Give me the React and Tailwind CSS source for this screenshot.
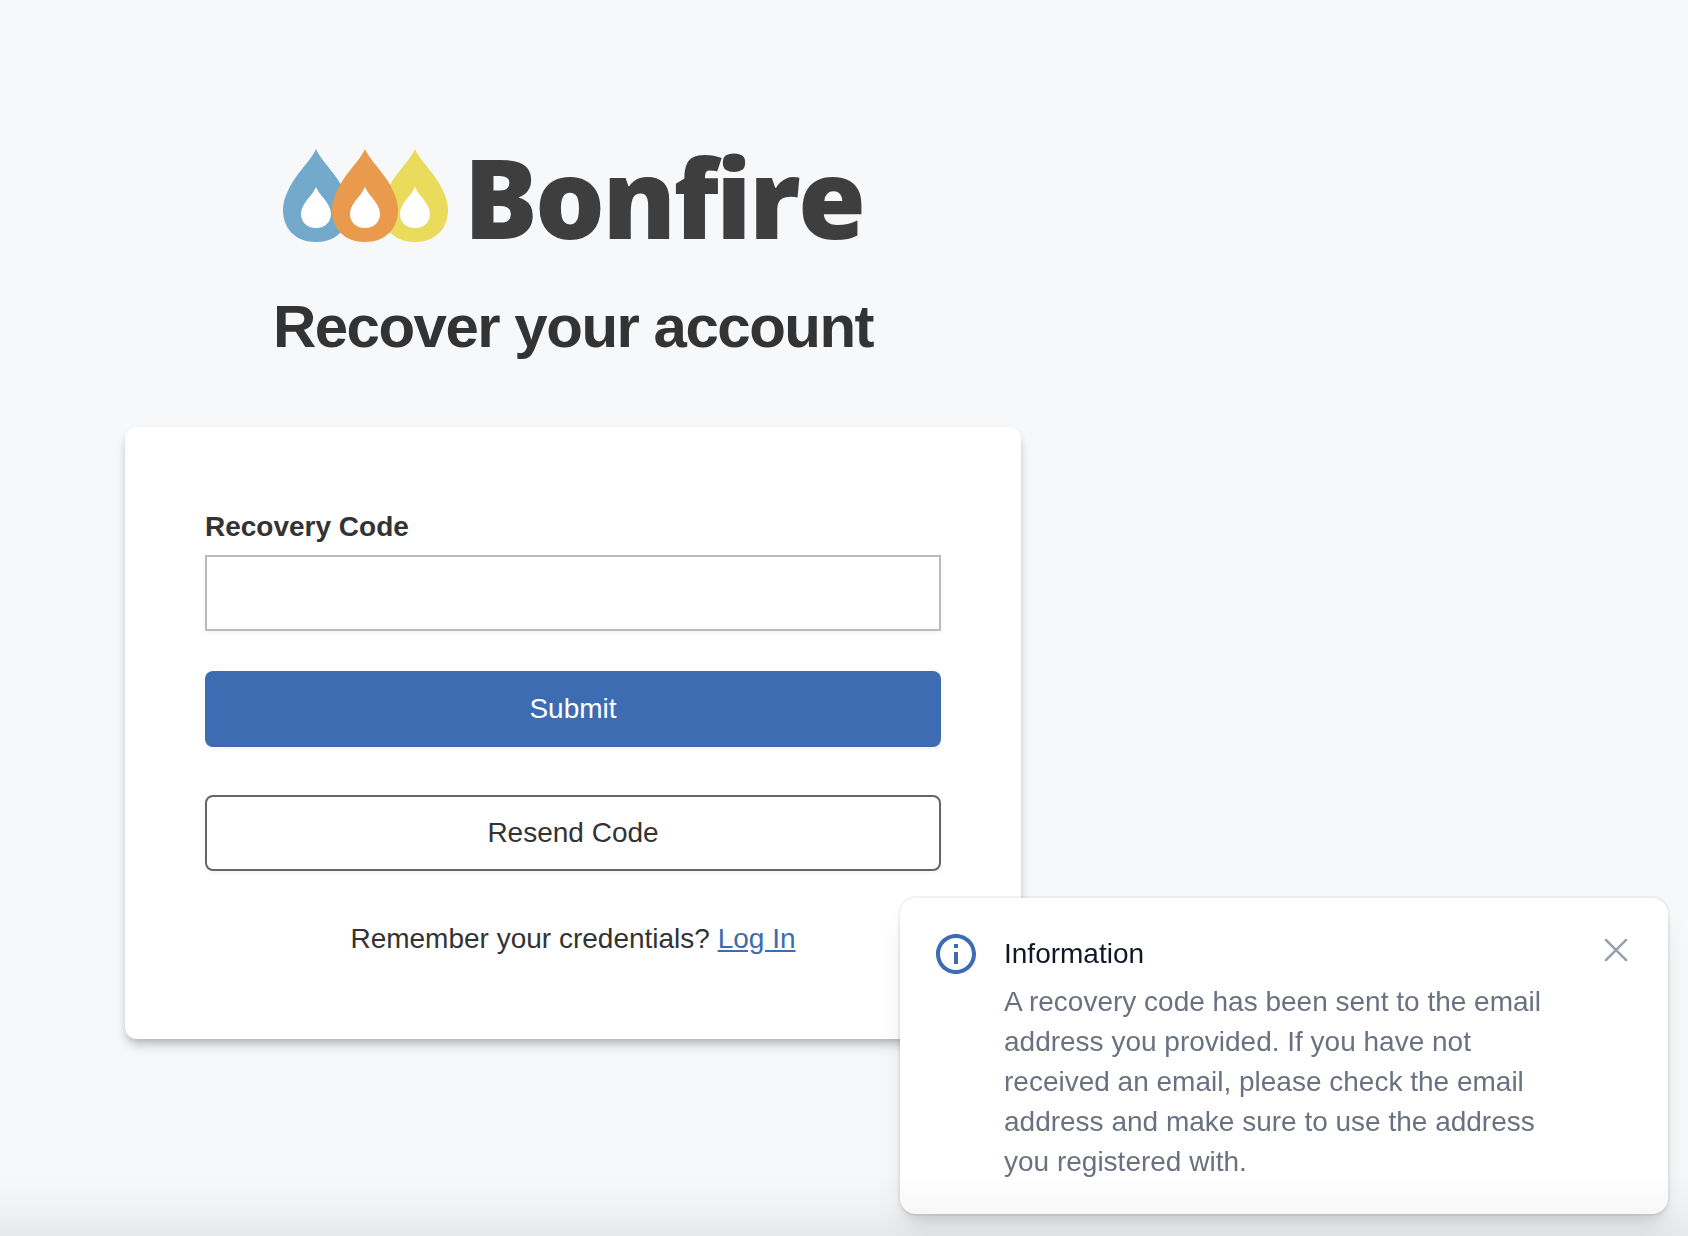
import { useState } from 'react';
import { X } from 'lucide-react';
import { MdInfoOutline } from 'react-icons/md';

const flames = [
  { x: 0, color: '#73aacc' },
  { x: 99, color: '#eadb5c' },
  { x: 49, color: '#ea9a4d' },
];

const Logo = () => (
  <div className="flex items-center justify-center gap-4 text-[#3e3e3e]">
    <svg viewBox="0 0 165 94" className="h-[94px] w-[165px]" aria-hidden="true">
      {flames.map(({ x, color }) => (
        <g key={color} transform={`translate(${x} 0)`}>
          <path
            d="M33 0C37 9 46 18 53 28C60 38 66 50 66 61C66 80 53 93 33 93C13 93 0 80 0 61C0 50 6 38 13 28C20 18 29 9 33 0Z"
            fill={color}
          />
          <path
            d="M33 38C35 43 39 47 42 51C45 55 48 60 48 65C48 73 42 79 33 79C24 79 18 73 18 65C18 60 21 55 24 51C27 47 31 43 33 38Z"
            fill="#fff"
          />
        </g>
      ))}
    </svg>
    <span className="font-['Open_Sans',sans-serif] text-[110px] leading-[94px] font-extrabold tracking-tight">
      Bonfire
    </span>
  </div>
);

const Toast = ({ title, message, onClose }) => (
  <div
    role="status"
    className="fixed right-5 bottom-[22px] w-full max-w-3xl rounded-2xl bg-white p-8 shadow-[0_0_0_2px_rgba(0,0,0,0.05),0_20px_30px_-6px_rgba(0,0,0,0.1),0_8px_12px_-4px_rgba(0,0,0,0.1)]"
  >
    <div className="flex items-start">
      <MdInfoOutline className="size-12 shrink-0 text-[#3d6cb2]" />
      <div className="ml-6 flex-1 pt-1">
        <p className="text-gray-900">{title}</p>
        <p className="mt-2 text-gray-500">{message}</p>
      </div>
      <button type="button" aria-label="Close" onClick={onClose} className="ml-8 shrink-0 text-gray-400">
        <X className="size-10" strokeWidth={1.5} />
      </button>
    </div>
  </div>
);

const App = () => {
  const [code, setCode] = useState('');
  const [showToast, setShowToast] = useState(true);

  const handleSubmit = (e) => {
    e.preventDefault();
  };

  return (
    <div className="min-h-screen bg-[#f7f8fa] font-['Liberation_Sans',Arial,sans-serif] text-[28px] leading-10 text-[#333]">
      <main className="max-w-[1146px] px-[125px] pt-[149px] pb-24">
        {/* Header */}
        <Logo />
        <h1 className="mt-12 text-center text-6xl leading-[72px] font-bold tracking-tight">Recover your account</h1>

        {/* Recovery form */}
        <form
          onSubmit={handleSubmit}
          className="mt-16 rounded-xl bg-white p-20 shadow-[0_8px_12px_-2px_rgba(0,0,0,0.18),0_4px_8px_-2px_rgba(0,0,0,0.15)]"
        >
          <label htmlFor="code" className="block font-bold">
            Recovery Code
          </label>
          <input
            id="code"
            type="text"
            value={code}
            onChange={(e) => setCode(e.target.value)}
            className="mt-2 block h-[76px] w-full border-2 border-[#bbb] bg-white px-6 shadow-[0_2px_4px_rgba(0,0,0,0.05)] outline-none"
          />
          <button
            type="submit"
            className="mt-10 block h-[76px] w-full rounded-lg bg-[#3d6cb2] text-white shadow-[0_2px_4px_rgba(0,0,0,0.05)]"
          >
            Submit
          </button>
          <button
            type="button"
            onClick={() => setShowToast(true)}
            className="mt-12 block h-[76px] w-full rounded-lg border-2 border-[#666] bg-white shadow-[0_2px_4px_rgba(0,0,0,0.05)]"
          >
            Resend Code
          </button>
          <p className="mt-12 text-center">
            Remember your credentials?{' '}
            <a href="#login" className="text-[#3d6cb2] underline">
              Log In
            </a>
          </p>
        </form>
      </main>

      {showToast && (
        <Toast
          title="Information"
          message="A recovery code has been sent to the email address you provided. If you have not received an email, please check the email address and make sure to use the address you registered with."
          onClose={() => setShowToast(false)}
        />
      )}

      {/* Bottom fade */}
      <div className="pointer-events-none fixed inset-x-0 bottom-0 h-16 bg-linear-to-t from-black/6 via-black/2 to-transparent" />
    </div>
  );
};

export default App;
